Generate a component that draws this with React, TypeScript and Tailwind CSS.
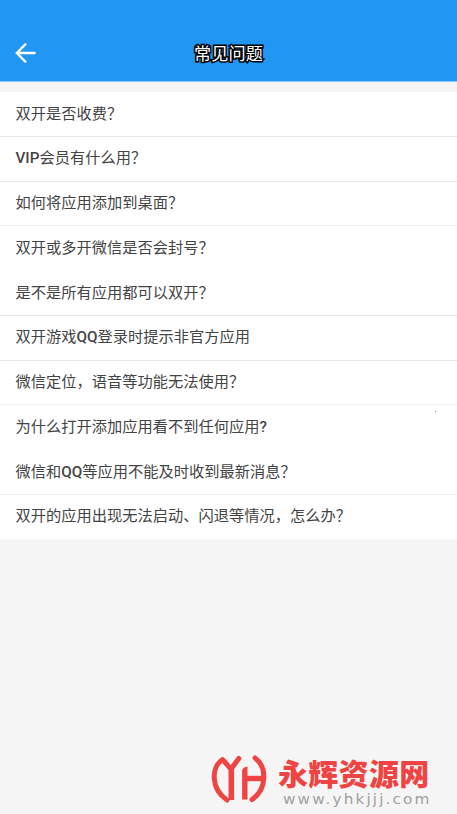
const questions = [
  { text: "双开是否收费？", line: "border-[#e6e6e6]" },
  { text: "VIP会员有什么用？", line: "border-[#e8e8e8]" },
  { text: "如何将应用添加到桌面？", line: "border-[#f0f0f0]" },
  { text: "双开或多开微信是否会封号？", line: "border-[#fcfcfc]" },
  { text: "是不是所有应用都可以双开？", line: "border-[#e8e8e8]" },
  { text: "双开游戏QQ登录时提示非官方应用", line: "border-[#e8e8e8]" },
  { text: "微信定位，语音等功能无法使用？", line: "border-[#f2f2f2]" },
  { text: "为什么打开添加应用看不到任何应用?", line: "border-[#fefefe]" },
  { text: "微信和QQ等应用不能及时收到最新消息？", line: "border-[#f2f2f2]" },
  { text: "双开的应用出现无法启动、闪退等情况，怎么办？", line: "border-[#fafafa]" },
];

function BackArrow() {
  return (
    <svg className="h-5 w-[21px]" viewBox="0 0 21 20" fill="none" stroke="#fff" strokeWidth="2.3" strokeLinecap="round">
      <path d="M10.3 1.4L1.8 10l8.5 8.6M2.5 10h17.2" />
    </svg>
  );
}

function Header() {
  return (
    <header className="grid h-[82px] grid-cols-[1fr_auto_1fr] border-b border-[#8dcbfa] bg-[#2196f3] px-[15px] pt-[42px]">
      <button type="button" aria-label="返回" className="flex h-[22px] items-center">
        <BackArrow />
      </button>
      <h1 className="mt-px h-[22px] text-[17.2px] leading-[22px] text-white [paint-order:stroke_fill] [-webkit-text-stroke:3px_#000]">
        常见问题
      </h1>
    </header>
  );
}

// Latin runs are set a step heavier than the Chinese around them.
function Question({ text }: { text: string }) {
  return (
    <span>
      {text.split(/([A-Z]+|\?)/).map((part, i) =>
        i % 2 ? <span key={i} className="font-medium">{part}</span> : part
      )}
    </span>
  );
}

function SiteMark() {
  return (
    <div className="absolute top-[752px] left-[210px] flex">
      <svg className="h-[54px] w-[58px]" viewBox="0 0 58 54" fill="none" stroke="#ee4444" strokeWidth="5">
        <path strokeLinecap="round" strokeLinejoin="round" d="M28.8 6.5L21 17L12.5 7.5C1 15 0.5 37 17 48" />
        <path strokeWidth="5.6" d="M21.3 16V48" />
        <path strokeWidth="5.4" d="M34.8 26.5H53" />
        <path fill="#ee4444" stroke="none" d="M32.1 18Q33 15 37.5 14.5V47.5H32.1Z" />
        <path strokeLinecap="round" d="M45 6C57 15 57.5 37 42 47.5" />
      </svg>
      <div className="mt-[7px] ml-[10px] flex flex-col">
        <span className="h-[32px] text-[30px] leading-[32px] font-black tracking-[0.3px] whitespace-nowrap text-[#ee4444]">永辉资源网</span>
        <span className="ml-[5px] h-[17px] origin-left scale-x-[1.13] font-['DejaVu_Sans'] text-[13.5px] leading-[17px] tracking-[1.9px] text-[#a0a0a0]">www.yhkjjj.com</span>
      </div>
    </div>
  );
}

export default function App() {
  return (
    <div className="relative h-[814px] w-[457px] overflow-hidden bg-[#f5f5f5] font-[Roboto,'Noto_Sans_CJK_SC',sans-serif]">
      <Header />
      <ul className="mt-[10px] bg-white">
        {questions.map((q) => (
          <li key={q.text} className={`flex h-[44.75px] items-center border-b pt-[0.3px] pl-[15.5px] text-[15.25px] whitespace-nowrap text-[#444] ${q.line}`}>
            <Question text={q.text} />
          </li>
        ))}
      </ul>
      <span className="absolute top-[411px] left-[435px] size-px bg-[#8a8a30]" />
      <SiteMark />
    </div>
  );
}
